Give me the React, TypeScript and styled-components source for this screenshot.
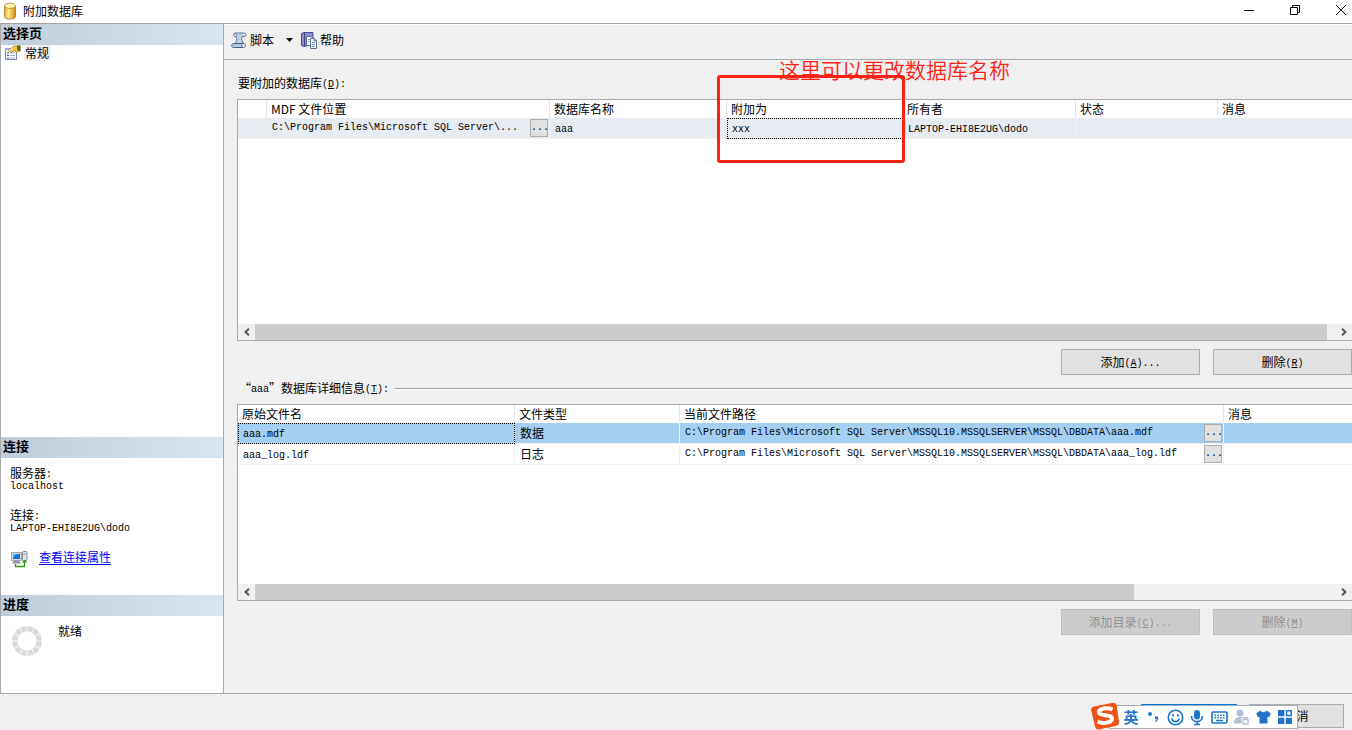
import React from "react";
import styled, { createGlobalStyle } from "styled-components";

const cjk = `"Noto Sans CJK SC", "Liberation Sans", sans-serif`;
const mono = `"Liberation Mono", "Noto Sans CJK SC", monospace`;
const line = "#a9a9ad";

const GlobalStyle = createGlobalStyle`
  * { box-sizing: border-box; }
  body { margin: 0; background: #f0f0f0; color: #000; font: 12px/16px ${cjk}; }
  button { font: inherit; color: inherit; padding: 0; }
`;

const Dialog = styled.div`
  position: relative;
  display: flex;
  flex-direction: column;
  min-height: 100vh;
  overflow: hidden;
`;

const TitleBar = styled.header`
  display: flex;
  align-items: center;
  gap: 6px;
  height: 24px;
  padding: 0 3px 1px;
  background: #fff;
  border-bottom: 1px solid #a0a0a0;
`;

const Title = styled.h1`
  flex: 1;
  margin: 0;
  font-size: 12px;
  font-weight: 400;
`;

const WindowButtons = styled.div`
  display: flex;
  gap: 30px;
  padding-bottom: 2px;
`;

const PlainButton = styled.button`
  display: flex;
  align-items: center;
  border: 0;
  background: none;
`;

const Body = styled.div`
  flex: 1;
  display: flex;
  border-bottom: 1px solid ${line};
`;

const Sidebar = styled.aside`
  display: flex;
  flex-direction: column;
  flex: none;
  width: 224px;
  background: #fff;
  border: solid ${line};
  border-width: 0 1px;
`;

const SideSection = styled.section<{ $height?: number }>`
  flex: ${(p) => (p.$height ? "none" : "1")};
  min-height: ${(p) => p.$height ?? 80}px;
`;

const SideHeading = styled.h2`
  margin: 0;
  height: 21px;
  padding-left: 2px;
  font-size: 13px;
  line-height: 17px;
  font-weight: 700;
  background: linear-gradient(90deg, #bfcddb, #d8e5f3);
`;

const PageItem = styled.a`
  display: flex;
  align-items: center;
  gap: 3px;
  padding-left: 3px;
  color: #000;
  text-decoration: none;
`;

const PageName = styled.span`
  padding: 0 2px 0 1px;
  background: #f0f0f0;
`;

const Facts = styled.dl`
  margin: 0;
  padding: 9px 0 0 9px;
  line-height: 12px;
`;

const Fact = styled.div`
  height: 42px;
  dt { height: 12px; }
  dd { margin: 0; height: 12px; }
`;

const LinkRow = styled.div`
  display: flex;
  align-items: flex-start;
  gap: 11px;
  padding-left: 10px;
  line-height: 12px;
  a { color: #00f; text-decoration: underline; text-underline-offset: 2px; }
`;

const Progress = styled.div`
  display: flex;
  align-items: flex-start;
  gap: 15px;
  padding: 7px 0 0 10px;
  svg { margin-top: 2px; }
`;

const Main = styled.main`
  flex: 1;
  min-width: 0;
  display: flex;
  flex-direction: column;
  border-top: 1px solid #fff;
`;

const Toolbar = styled.div`
  display: flex;
  align-items: center;
  height: 35px;
  padding: 0 0 4px 7px;
  border-bottom: 1px solid ${line};
`;

const ToolButton = styled(PlainButton)`
  gap: 3px;
`;

const ToolArrow = styled(PlainButton)`
  padding: 0 8px 0 12px;
`;

const Content = styled.div`
  flex: 1;
  display: flex;
  flex-direction: column;
  padding: 15px 0 58px 13px;
`;

const GridLabel = styled.h3`
  margin: 0;
  height: 24px;
  padding-left: 1px;
  font-size: 12px;
  font-weight: 400;
`;

const GroupLabel = styled(GridLabel)`
  display: flex;
  gap: 6px;
  padding-left: 2px;
  &::after {
    content: "";
    flex: 1;
    height: 1px;
    margin-top: 8px;
    background: #a0a0a0;
    border-bottom: 1px solid #fff;
  }
`;

const Latin = styled.span`
  font-family: ${mono};
  font-size: 10px;
  line-height: 10px;
  vertical-align: 1px;
  white-space: pre;
`;

const GridBox = styled.div<{ $basis: number }>`
  position: relative;
  flex: 1 0 ${(p) => p.$basis}px;
  display: flex;
  flex-direction: column;
  justify-content: space-between;
  background: #fff;
  border: solid ${line};
  border-width: 1px 0 1px 1px;
`;

const Table = styled.table`
  width: 100%;
  table-layout: fixed;
  border-collapse: separate;
  border-spacing: 0;
`;

const Th = styled.th`
  height: 18px;
  padding: 0 0 0 4px;
  line-height: 18px;
  font-weight: 400;
  text-align: left;
  white-space: nowrap;
  border-right: 1px solid #e3e3e3;
  &:last-child { border-right: 0; }
`;

const tones = { plain: "#fff", soft: "#e6ecf1", selected: "#a5cff0" };

const Row = styled.tr<{ $tone: keyof typeof tones }>`
  background: ${(p) => tones[p.$tone]};
`;

const Td = styled.td<{ $focus?: boolean }>`
  height: 21px;
  padding: 0 0 0 5px;
  line-height: 16px;
  white-space: nowrap;
  border: solid #f0f0f0;
  border-width: 0 1px 1px 0;
  outline: ${(p) => (p.$focus ? "1px dotted #000" : "none")};
  outline-offset: ${(p) => (p.$focus ? "-1px" : "0")};
  &:last-child { border-right: 0; }
`;

const PathCell = styled.div`
  display: flex;
  justify-content: space-between;
  align-items: center;
  height: 20px;
  padding-right: 1px;
`;

const BrowseButton = styled.button`
  width: 18px;
  height: 18px;
  background: #e1e1e1;
  border: 1px solid #adadad;
  font: 10px/16px ${mono};
  overflow: hidden;
`;

const ScrollBar = styled.div`
  display: flex;
  height: 16px;
  background: #f0f0f0;
`;

const ScrollArrow = styled(PlainButton)`
  flex: none;
  justify-content: center;
  width: 17px;
`;

const Track = styled.div`
  flex: 1;
`;

const Thumb = styled.div<{ $share: number }>`
  width: ${(p) => p.$share}%;
  height: 100%;
  background: #cdcdcd;
`;

const Actions = styled.div<{ $space: number }>`
  display: flex;
  justify-content: flex-end;
  gap: 13px;
  padding: 8px 0 ${(p) => p.$space}px;
`;

const PushButton = styled.button<{ $width?: number; $default?: boolean }>`
  width: ${(p) => p.$width ?? 139}px;
  height: 26px;
  line-height: 24px;
  background: #e1e1e1;
  border: ${(p) => (p.$default ? "2px solid #0078d7" : "1px solid #adadad")};
  &:disabled { background: #ccc; border-color: #bfbfbf; color: #8f8f8f; }
`;

const Footer = styled.footer`
  display: flex;
  justify-content: flex-end;
  gap: 12px;
  height: 36px;
  padding: 10px 8px 0 0;
  button { height: 24px; line-height: 22px; }
`;

const Marker = styled.div`
  position: absolute;
  top: -25px;
  left: 479px;
  width: 188px;
  height: 88px;
  border: 3px solid #fe2114;
  border-radius: 3px;
  pointer-events: none;
`;

const MarkerNote = styled.p`
  position: absolute;
  top: -45px;
  left: 541px;
  margin: 0;
  font-size: 21px;
  line-height: 28px;
  font-weight: 350;
  color: #fe2114;
  white-space: nowrap;
`;

const ImeBar = styled.div`
  position: absolute;
  right: 54px;
  bottom: 1px;
  display: flex;
  align-items: center;
  height: 24px;
  padding: 0 1px 0 30px;
  background: #fff;
  border: 1px solid #a9abb8;
  color: #1f74c6;
`;

const ImeLogo = styled.svg`
  position: absolute;
  left: -20px;
  bottom: -2px;
`;

const ImeKey = styled(PlainButton)`
  justify-content: center;
  width: 22px;
  height: 22px;
  font-size: 15px;
  font-weight: 700;
`;

const ImeKeys = styled.div`
  display: flex;
  margin-left: -20px;
`;

function DatabaseIcon() {
  return (
    <svg width="14" height="18" viewBox="0 0 14 18">
      <defs>
        <linearGradient id="gold">
          <stop offset="0" stopColor="#e7a91b" />
          <stop offset=".35" stopColor="#ffe98f" />
          <stop offset="1" stopColor="#d28a08" />
        </linearGradient>
      </defs>
      <path d="M1.5 4v10.5C1.5 18 12.500 18 12.500 14.500V4" fill="url(#gold)" stroke="#a87512" strokeWidth=".8" />
      <ellipse cx="7" cy="3.800" rx="5.500" ry="2.600" fill="#fff2b4" stroke="#b98a26" strokeWidth=".8" />
    </svg>
  );
}

function PropertiesIcon() {
  return (
    <svg width="17" height="16" viewBox="0 0 17 16">
      <path d="M1.500 3.500h11v11h-11z" fill="#f8fafe" stroke="#7386b8" />
      <path d="M1.500 3.500h5v2h-5z" fill="#b4c0df" />
      <path d="M3 8h2M3 10.500h2M3 13h2" stroke="#3a58ad" />
      <path d="M6 8h5M6 10.500h5M6 13h5" stroke="#a9b4d0" />
      <path d="M4.500 6 9 1.500 11.500 1l4.500 0V6l-3.500 1.500-2-2L7 7.500z" fill="#f3ca42" stroke="#a37a1e" strokeWidth=".8" />
      <path d="M13 .5h3.500v6L13 5z" fill="#536b2e" />
      <path d="m5 6 4-3.500" stroke="#fff4bd" />
    </svg>
  );
}

function ScriptIcon() {
  return (
    <svg width="16" height="17" viewBox="0 0 16 17">
      <path d="M4 1h9.500c2 0 2 3.500 0 3.500H11l-.5 3 2 4h-8L6 8 5.500 4.500H4C2 4 2 1.500 4 1z" fill="#d3e0f1" stroke="#5b7596" />
      <path d="M4 1.200c2 0 2 3.200.5 3.300" fill="none" stroke="#5b7596" />
      <path d="M5.500 2.800h6.500M7 5h3M7.500 7.500h2M7 10h4" stroke="#a3b9d6" />
      <path d="M2.500 11.500h9c-1 1-1 3 .5 4H2.800C0 15.500 0 11.800 2.500 11.500z" fill="#b5c9e3" stroke="#435f80" />
      <path d="M11.500 11.500c3-.5 4.500 3 1 4" fill="#f4f8fd" stroke="#435f80" />
    </svg>
  );
}

function HelpIcon() {
  return (
    <svg width="16" height="17" viewBox="0 0 16 17">
      <path d="M.5 1.500 3 .5h9v12l-9 2-2.500-1z" fill="#8b8fce" stroke="#484c93" />
      <path d="M3.500 1v13" stroke="#3f4386" />
      <path d="M5.500 4.500H10l2 2v7H5.500z" fill="#f5f8fd" stroke="#596d91" />
      <path d="M9.500 6.500h3.700l2.300 2.300v7.700h-6z" fill="#fff" stroke="#596d91" />
      <path d="M11 10.500h3M11 12.500h3M11 14.500h3M7 7.500h1.500M7 9.500h1.500" stroke="#7192bd" />
      <path d="M13 6.500v2.300h2.500" fill="none" stroke="#596d91" />
    </svg>
  );
}

function ConnectionIcon() {
  return (
    <svg width="17" height="17" viewBox="0 0 17 17">
      <path d="M.5 1.500h10v8H.5z" fill="#d6dae4" stroke="#9ba3b4" />
      <path d="M2 3h7v5H2z" fill="#1673df" />
      <path d="M2 3h4L2 7z" fill="#55a6f4" />
      <path d="M3 10h5l2 2.500H1z" fill="#8a90a2" />
      <rect x="11.500" y=".5" width="4.500" height="9" rx="1" fill="#e3e6eb" stroke="#858b98" />
      <path d="M12.500 3h2.500" stroke="#858b98" />
      <path d="M4.500 13v2.500h9V10" fill="none" stroke="#379713" strokeWidth="1.300" />
      <path d="m13.500 8.500 2.800 3h-5.600z" fill="#379713" />
    </svg>
  );
}

function Spinner() {
  return (
    <svg width="32" height="32" viewBox="0 0 32 32">
      <circle cx="16" cy="16" r="12.200" fill="none" stroke="#dadada" strokeWidth="5.500" pathLength="120" strokeDasharray="8.600 1.400" strokeDashoffset="-.7" />
    </svg>
  );
}

function Chevron({ right }: { right?: boolean }) {
  return (
    <svg width="8" height="8" viewBox="0 0 8 8">
      <path d={right ? "M2 .8 5.500 4 2 7.200" : "M6 .8 2.500 4 6 7.200"} fill="none" stroke="#555" strokeWidth="2" />
    </svg>
  );
}

function HorizontalScroll({ share }: { share: number }) {
  return (
    <ScrollBar>
      <ScrollArrow aria-label="向左滚动"><Chevron /></ScrollArrow>
      <Track><Thumb $share={share} /></Track>
      <ScrollArrow aria-label="向右滚动"><Chevron right /></ScrollArrow>
    </ScrollBar>
  );
}

function Hotkey({ letter, tail = "" }: { letter: string; tail?: string }) {
  return <Latin>(<u>{letter}</u>){tail}</Latin>;
}

function Columns({ widths }: { widths: number[] }) {
  return (
    <colgroup>
      {widths.map((w, i) => <col key={i} width={w} />)}
      <col />
    </colgroup>
  );
}

function PathValue({ path }: { path: string }) {
  return (
    <PathCell>
      <Latin>{path}</Latin>
      <BrowseButton aria-label="浏览">...</BrowseButton>
    </PathCell>
  );
}

const files = [
  { name: "aaa.mdf", type: "数据", tone: "selected" as const },
  { name: "aaa_log.ldf", type: "日志", tone: "plain" as const },
];
const folder = "C:\\Program Files\\Microsoft SQL Server\\MSSQL10.MSSQLSERVER\\MSSQL\\DBDATA\\";

function InputMethodBar() {
  return (
    <ImeBar>
      <ImeLogo width="30" height="28" viewBox="0 0 30 28">
        <path d="M4 4.500 23 .8q3-.4 3.700 2.500L29 20q.3 3-2.500 3.800L9 27.500q-3 .5-3.800-2.500L1.200 8.500Q.8 5.300 4 4.500z" fill="#ef5318" />
        <path d="M22.500 7.500C17 5 8.500 6.500 9 10.500c.5 4 13 1.500 13 6 0 4.500-9 5.500-14.500 3" fill="none" stroke="#fff" strokeWidth="4" />
      </ImeLogo>
      <ImeKeys>
        <ImeKey>英</ImeKey>
        <ImeKey aria-label="标点">
          <svg width="12" height="14" viewBox="0 0 12 14">
            <circle cx="3" cy="4" r="2" fill="currentColor" />
            <path d="M8 6.500h3c.5 3-.5 4.500-2.500 5.500L8 11c1-.5 1.500-1 1.500-2H8z" fill="currentColor" />
          </svg>
        </ImeKey>
        <ImeKey aria-label="表情">
          <svg width="17" height="17" viewBox="0 0 17 17" fill="none" stroke="currentColor" strokeWidth="1.600">
            <circle cx="8.500" cy="8.500" r="7.200" />
            <path d="M4.800 9.500c1 4.200 6.400 4.200 7.400 0M6 5v2.500M11 5v2.500" />
          </svg>
        </ImeKey>
        <ImeKey aria-label="语音">
          <svg width="14" height="17" viewBox="0 0 14 17" fill="none" stroke="currentColor" strokeWidth="1.700">
            <rect x="4" y="1" width="6" height="9.500" rx="3" fill="currentColor" stroke="none" />
            <path d="M1.500 7c0 7.500 11 7.500 11 0M7 12.500V16M4 15.500h6" />
          </svg>
        </ImeKey>
        <ImeKey aria-label="软键盘">
          <svg width="17" height="13" viewBox="0 0 17 13" fill="none" stroke="currentColor">
            <rect x="1" y="1" width="15" height="11" rx="1" strokeWidth="1.600" />
            <path d="M3.500 4.200h10M3.500 6.700h10" strokeWidth="1.500" strokeDasharray="1.600 1.200" />
            <path d="M5 9.500h7" strokeWidth="1.500" />
          </svg>
        </ImeKey>
        <ImeKey aria-label="账户">
          <svg width="15" height="16" viewBox="0 0 15 16" fill="#b5bfd3">
            <circle cx="6" cy="4" r="3.500" />
            <path d="M0 14.500C0 9.500 2.500 8 6 8c2 0 3 .3 4 1H7.500v5.500z" />
            <path d="M9 10.500h5V15H9zM10 10V8.500h3V10" fill="#fff" stroke="#b5bfd3" strokeWidth="1.300" />
          </svg>
        </ImeKey>
        <ImeKey aria-label="皮肤">
          <svg width="15" height="14" viewBox="0 0 15 14">
            <path d="M4.500.5c1 2.200 5 2.200 6 0l4.200 2.700-1.500 4-1.700-.7v7h-8v-7l-1.700.7-1.500-4z" fill="currentColor" />
          </svg>
        </ImeKey>
        <ImeKey aria-label="工具箱">
          <svg width="14" height="14" viewBox="0 0 14 14" fill="currentColor">
            <path d="M0 0h6.300v6.300H0zM0 7.700h6.300V14H0zM7.700 7.700H14V14H7.700z" />
            <path d="M8.500.8h4.700v4.700H8.500z" fill="none" stroke="currentColor" strokeWidth="1.500" />
          </svg>
        </ImeKey>
      </ImeKeys>
    </ImeBar>
  );
}

export default function App() {
  return (
    <Dialog lang="zh-CN">
      <GlobalStyle />
      <TitleBar>
        <DatabaseIcon />
        <Title>附加数据库</Title>
        <WindowButtons>
          <PlainButton aria-label="最小化">
            <svg width="16" height="12" viewBox="0 0 16 12"><path d="M3 6.500h10" stroke="#000" /></svg>
          </PlainButton>
          <PlainButton aria-label="还原">
            <svg width="16" height="12" viewBox="0 0 16 12" fill="none" stroke="#000"><path d="M3.500 3.500h7v7h-7zM5.500 3V1.500h7v7H11" /></svg>
          </PlainButton>
          <PlainButton aria-label="关闭">
            <svg width="16" height="12" viewBox="0 0 16 12"><path d="m3 1 10 10M13 1 3 11" stroke="#000" /></svg>
          </PlainButton>
        </WindowButtons>
      </TitleBar>

      <Body>
        <Sidebar>
          <SideSection>
            <SideHeading>选择页</SideHeading>
            <PageItem href="#general"><PropertiesIcon /><PageName>常规</PageName></PageItem>
          </SideSection>
          <SideSection $height={158}>
            <SideHeading>连接</SideHeading>
            <Facts>
              <Fact><dt>服务器<Latin>:</Latin></dt><dd><Latin>localhost</Latin></dd></Fact>
              <Fact><dt>连接<Latin>:</Latin></dt><dd><Latin>LAPTOP-EHI8E2UG\dodo</Latin></dd></Fact>
            </Facts>
            <LinkRow><ConnectionIcon /><a href="#connection">查看连接属性</a></LinkRow>
          </SideSection>
          <SideSection $height={98}>
            <SideHeading>进度</SideHeading>
            <Progress><Spinner /><span>就绪</span></Progress>
          </SideSection>
        </Sidebar>

        <Main>
          <Toolbar>
            <ToolButton><ScriptIcon />脚本</ToolButton>
            <ToolArrow aria-label="脚本选项">
              <svg width="7" height="4" viewBox="0 0 7 4"><path d="M0 0h7L3.500 4z" fill="#111" /></svg>
            </ToolArrow>
            <ToolButton><HelpIcon />帮助</ToolButton>
          </Toolbar>

          <Content>
            <GridLabel>要附加的数据库<Hotkey letter="D" tail=":" /></GridLabel>
            <GridBox $basis={242}>
              <Table>
                <Columns widths={[29, 283, 177, 176, 173, 142]} />
                <thead>
                  <tr>
                    <Th /><Th>MDF 文件位置</Th><Th>数据库名称</Th><Th>附加为</Th><Th>所有者</Th><Th>状态</Th><Th>消息</Th>
                  </tr>
                </thead>
                <tbody>
                  <Row $tone="soft">
                    <Td />
                    <Td><PathValue path="C:\Program Files\Microsoft SQL Server\..." /></Td>
                    <Td><Latin>aaa</Latin></Td>
                    <Td $focus><Latin>xxx</Latin></Td>
                    <Td><Latin>LAPTOP-EHI8E2UG\dodo</Latin></Td>
                    <Td /><Td />
                  </Row>
                </tbody>
              </Table>
              <HorizontalScroll share={99.3} />
              <Marker />
              <MarkerNote>这里可以更改数据库名称</MarkerNote>
            </GridBox>
            <Actions $space={5}>
              <PushButton>添加<Hotkey letter="A" tail="..." /></PushButton>
              <PushButton>删除<Hotkey letter="R" /></PushButton>
            </Actions>

            <GroupLabel><span>“<Latin>aaa</Latin>”数据库详细信息<Hotkey letter="T" tail=":" /></span></GroupLabel>
            <GridBox $basis={197}>
              <Table>
                <Columns widths={[277, 165, 544]} />
                <thead>
                  <tr><Th>原始文件名</Th><Th>文件类型</Th><Th>当前文件路径</Th><Th>消息</Th></tr>
                </thead>
                <tbody>
                  {files.map((f) => (
                    <Row key={f.name} $tone={f.tone}>
                      <Td $focus={f.tone === "selected"}><Latin>{f.name}</Latin></Td>
                      <Td>{f.type}</Td>
                      <Td><PathValue path={folder + f.name} /></Td>
                      <Td />
                    </Row>
                  ))}
                </tbody>
              </Table>
              <HorizontalScroll share={81.4} />
            </GridBox>
            <Actions $space={0}>
              <PushButton disabled>添加目录<Hotkey letter="C" tail="..." /></PushButton>
              <PushButton disabled>删除<Hotkey letter="M" /></PushButton>
            </Actions>
          </Content>
        </Main>
      </Body>

      <Footer>
        <PushButton $width={96} $default>确定</PushButton>
        <PushButton $width={95}>取消</PushButton>
      </Footer>
      <InputMethodBar />
    </Dialog>
  );
}
